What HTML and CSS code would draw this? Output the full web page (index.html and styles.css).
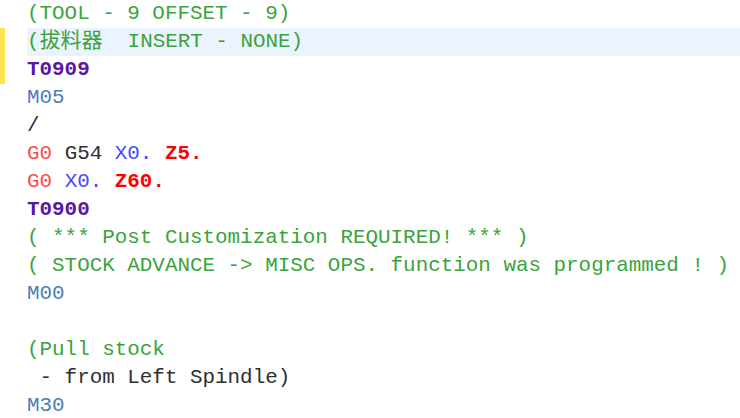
FILE: index.html
```html
<!DOCTYPE html>
<html>
<head>
<meta charset="utf-8">
<link rel="stylesheet" href="styles.css">
</head>
<body>
<div class="editor">
  <div class="gutter"><div class="mark"></div></div>
  <div class="code">
    <div class="line"><span class="c">(TOOL - 9 OFFSET - 9)</span></div>
    <div class="line current"><span class="c">(<span class="cjk">拔料器</span>  INSERT - NONE)</span></div>
    <div class="line"><span class="t">T0909</span></div>
    <div class="line"><span class="m">M05</span></div>
    <div class="line"><span class="d">/</span></div>
    <div class="line"><span class="g">G0</span> <span class="d">G54</span> <span class="x">X0.</span> <span class="z">Z5.</span></div>
    <div class="line"><span class="g">G0</span> <span class="x">X0.</span> <span class="z">Z60.</span></div>
    <div class="line"><span class="t">T0900</span></div>
    <div class="line"><span class="c">( *** Post Customization REQUIRED! *** )</span></div>
    <div class="line"><span class="c">( STOCK ADVANCE -&gt; MISC OPS. function was programmed ! )</span></div>
    <div class="line"><span class="m">M00</span></div>
    <div class="line"></div>
    <div class="line"><span class="c">(Pull stock</span></div>
    <div class="line"><span class="d"> - from Left Spindle)</span></div>
    <div class="line"><span class="m">M30</span></div>
  </div>
</div>
</body>
</html>
```
FILE: styles.css
```css
html, body {
  margin: 0;
  padding: 0;
  background: #ffffff;
}
.editor {
  display: flex;
  width: 740px;
  height: 418px;
  overflow: hidden;
}
.gutter {
  width: 27px;
  flex: none;
}
.mark {
  margin-top: 28px;
  width: 5px;
  height: 56px;
  background: #fde34f;
}
.code {
  flex: 1;
  font-family: "Liberation Mono", "Noto Sans CJK SC", monospace;
  font-size: 20.9px;
}
.line {
  height: 28px;
  line-height: 28px;
  white-space: pre;
  color: #333333;
}
.current {
  background: #eaf3fe;
}
.cjk {
  font-family: "Noto Sans CJK SC", sans-serif;
  font-size: 21px;
  line-height: 0;
}
.c { color: #3ba33b; }
.m { color: #4a7db9; }
.t { color: #5a17a4; font-weight: bold; }
.d { color: #2e2e2e; }
.g { color: #ff4a4a; }
.x { color: #4646ff; }
.z { color: #ff0000; font-weight: bold; }
```
